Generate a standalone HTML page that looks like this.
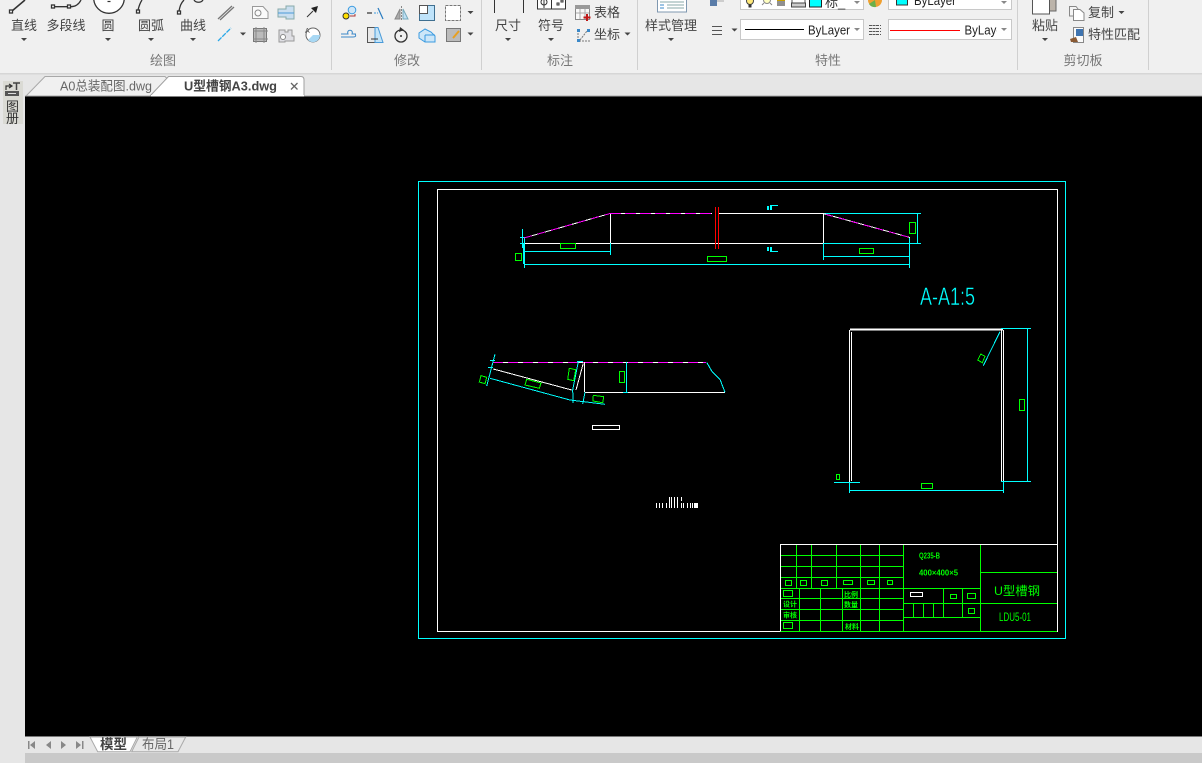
<!DOCTYPE html>
<html><head><meta charset="utf-8"><title>CAD</title>
<style>
html,body{margin:0;padding:0;background:#000;width:1202px;height:763px;overflow:hidden}
svg{display:block}
text{font-family:"Liberation Sans","Noto Sans CJK SC",sans-serif}
.t{font-size:13px;fill:#444;text-anchor:middle}
.l{font-size:13px;fill:#777;text-anchor:middle}
.s{fill:none;shape-rendering:crispEdges}
.g{fill:none;stroke:#0f0;stroke-width:1;shape-rendering:crispEdges}
.c{fill:none;stroke:#0ff;stroke-width:1;shape-rendering:crispEdges}
.w{fill:none;stroke:#fff;stroke-width:1;shape-rendering:crispEdges}
.gt{fill:#0f0}
</style></head><body>
<svg width="1202" height="763" viewBox="0 0 1202 763" xmlns="http://www.w3.org/2000/svg">
<!-- backgrounds -->
<rect width="1202" height="763" fill="#e6e6e6"/>
<rect width="1202" height="73" fill="#f0f0f0"/>
<rect y="73" width="1202" height="1.5" fill="#d6d6d6"/>
<rect x="25" y="96" width="1177" height="640" fill="#000"/>
<rect x="25" y="736" width="1177" height="1" fill="#777"/>
<rect x="25" y="753" width="1177" height="10" fill="#c9c9c9"/>
<!-- ribbon separators -->
<g stroke="#d0d0d0" class="s"><path d="M331.500 0V70M481.500 0V70M637.500 0V70M1017.500 0V70M1148.500 0V70"/></g>
<!-- draw group icons -->
<g fill="none" stroke="#333" stroke-width="1.300">
<path d="M12 11L25 0" stroke-width="1.600"/><rect x="9.500" y="10" width="3" height="3" fill="#fff"/>
<path d="M54 6.700H68M71 6.700C76 6.700 79 4 81 0"/><rect x="51.500" y="5" width="3" height="3" fill="#fff"/><rect x="67.500" y="5" width="3" height="3" fill="#fff"/>
<circle cx="109" cy="-2" r="15.300" fill="#fff"/><path d="M107.500 1.500H110.500" stroke-width="1.200"/>
<path d="M138 10C139 6 140 3 142 0"/><rect x="136.500" y="10" width="3" height="3" fill="#fff"/>
<path d="M179 11C180 6 181 3 184 0M194 0C196 3 201 3 203 0"/><rect x="177.500" y="11" width="3" height="3" fill="#fff"/>
</g>
<g class="t">
<text x="24" y="30" class="t">直线</text><text x="66" y="30" class="t">多段线</text><text x="108" y="30" class="t">圆</text><text x="151" y="30" class="t">圆弧</text><text x="193" y="30" class="t">曲线</text>
<text x="508" y="30" class="t">尺寸</text><text x="551" y="30" class="t">符号</text><text x="607" y="17" class="t">表格</text><text x="607" y="39" class="t">坐标</text><text x="671" y="30" class="t">样式管理</text>
<text x="1045" y="30" class="t">粘贴</text><text x="1101" y="17" class="t">复制</text><text x="1114" y="39" class="t">特性匹配</text>
</g>
<text x="163" y="65" class="l">绘图</text><text x="407" y="65" class="l">修改</text><text x="560" y="65" class="l">标注</text><text x="828" y="65" class="l">特性</text><text x="1083" y="65" class="l">剪切板</text>
<!-- dropdown arrows -->
<g fill="#444">
<path d="M21 38h6l-3 3zM105 38h6l-3 3zM148 38h6l-3 3zM190 38h6l-3 3zM240 32.500h6l-3 3zM467.500 11h6l-3 3zM467.500 32.500h6l-3 3zM505 38h6l-3 3zM548 38h6l-3 3zM624.500 32.500h6l-3 3zM668 38h6l-3 3zM731.500 28.500h6l-3 3zM1042 38h6l-3 3zM1118.500 11h6l-3 3z"/>
</g>
<!-- small draw icons -->
<path d="M218 19L232 6M220 20L234 7" stroke="#777" stroke-width="1.300" fill="none"/>
<path d="M218 41L231 28" stroke="#2aa8e8" stroke-width="1.300" stroke-dasharray="5 1" fill="none"/>
<path d="M252.500 6.500H263L268 12V18.500H252.500Z" fill="#fafafa" stroke="#999"/><circle cx="258" cy="13" r="3" fill="none" stroke="#888"/>
<path d="M278 9H286V6H294V19H286V17H278Z" fill="#c9def0" stroke="#8aa"/><path d="M278 13H294" stroke="#4a9ad8"/>
<path d="M307 17L313 11" stroke="#333"/><path d="M311 8L318 6L316 13Z" fill="#222"/>
<rect x="253.500" y="28.500" width="13" height="13" fill="#bbb" stroke="#777"/><path d="M253 31H268M253 39H268M256 27V43M264 27V43" stroke="#888" fill="none"/>
<path d="M279 30H285V32H288V30H292V36H294V41H285V42H279Z" fill="#dfdfe4" stroke="#999"/><circle cx="283" cy="37" r="2.500" fill="#fff" stroke="#888"/>
<circle cx="313" cy="35" r="7" fill="#fff" stroke="#666"/><path d="M313 35H320A7 7 0 0 1 308 40Z" fill="#a8d8f4"/><text x="305" y="33" font-size="7" fill="#555">A</text>
<!-- modify icons -->
<circle cx="352" cy="10" r="3.800" fill="#cfe6f7" stroke="#3b9be0"/><circle cx="346" cy="16" r="3" fill="#ffe000" stroke="#333"/><path d="M350 16H355V14" stroke="#a33" fill="none"/>
<path d="M367 13H372" stroke="#555" stroke-width="1.500"/><path d="M374 13H378" stroke="#3b9be0" stroke-dasharray="2 1"/><path d="M378 8L383 19" stroke="#2a7cc0" stroke-width="1.200"/>
<path d="M395 19L400 9V19Z" fill="#aaa" stroke="#888"/><path d="M403 9L408 19H403Z" fill="#bfe0f5" stroke="#7ab"/><path d="M401.500 6V20" stroke="#888" stroke-dasharray="2 1"/>
<rect x="419.500" y="5.500" width="15" height="15" fill="#bfe3fa" stroke="#3f6f90"/><rect x="419.500" y="5.500" width="8" height="8" fill="#fff" stroke="#555"/>
<rect x="445.500" y="5.500" width="15" height="15" fill="#fff" stroke="#777" stroke-dasharray="3 1"/>
<path d="M341 34H348C346 29 354 29 352 34H356M341 37H353Q357 37 355 34" fill="none" stroke="#3b88c8"/>
<path d="M367.500 27.500H375V42.500H367.500Z" fill="#e8e8e8" stroke="#555"/><path d="M375 27.500H378L383 42.500H375Z" fill="#c3e4f8" stroke="#4a9ad8"/><path d="M371 39H378" stroke="#333"/>
<circle cx="401" cy="36" r="6" fill="none" stroke="#333" stroke-width="1.300"/><circle cx="401" cy="36" r="1" fill="#333"/><path d="M400 27L404 30L399 32Z" fill="#333"/>
<path d="M419 33L425 29L431 32L435 36V42H425L419 38Z" fill="#cce6f8" stroke="#3b9be0"/><path d="M425 35H435M425 35V42" stroke="#3b9be0" fill="none"/>
<rect x="446.500" y="28.500" width="14" height="13" fill="#bbb" stroke="#777"/><path d="M453 38L459 31" stroke="#e8a020" stroke-width="2"/>
<!-- annotation icons -->
<path d="M494.500 0V13M523.500 0V13" stroke="#333"/>
<rect x="537.500" y="-2" width="28" height="11" fill="#fff" stroke="#333"/><path d="M551.500 0V9" stroke="#333"/><circle cx="544" cy="2" r="3" fill="none" stroke="#333"/><path d="M544 -1V8M557 3h2v2h-2zM561 0h2v2h-2z" stroke="#333" fill="none"/>
<rect x="575.500" y="5.500" width="14" height="14" fill="#f8f8f8" stroke="#888"/><rect x="575" y="5" width="15" height="4" fill="#999"/><path d="M580 9V19M585 9V19M576 13H589" stroke="#aaa"/><path d="M587 14V21M583.500 17.500H590.500" stroke="#c01818" stroke-width="2"/>
<path d="M578 30V41H590M580 40L587 31" stroke="#777" fill="none" stroke-dasharray="2 1"/><path d="M577 29h3v3h-3zM587 29h3v3h-3zM577 39h3v3h-3z" fill="#3b88c8"/>
<!-- style manager -->
<rect x="657.500" y="-3" width="29" height="15" fill="#fff" stroke="#7f98b0"/><path d="M660 2H684M667 5H684M667 8H684" stroke="#8aa" fill="none"/><path d="M660 5H664M660 8H664" stroke="#3b88c8"/>
<!-- properties row -->
<rect x="710" y="0" width="7" height="6" fill="#5a7ca8"/><path d="M717 1H724" stroke="#aaa"/>
<rect x="740.500" y="-3" width="123" height="12.500" fill="#fff" stroke="#c8c8c8"/>
<circle cx="750" cy="1" r="3.500" fill="#ffe97a" stroke="#444"/><rect x="748.500" y="4.500" width="3" height="3" fill="#333"/>
<circle cx="767" cy="0" r="3.500" fill="#ffffc0" stroke="#888"/><path d="M762 5L764 3M772 5L770 3" stroke="#888"/>
<path d="M777 1H785M777 3H785M777 5H785" stroke="#222"/><rect x="777" y="0" width="8" height="1" fill="#c8a000"/>
<rect x="792" y="-2" width="13" height="7" fill="#fff" stroke="#555"/><rect x="791.500" y="3" width="14" height="4" fill="#ccc" stroke="#444"/>
<rect x="809.500" y="-3" width="12" height="10" fill="#0ff" stroke="#222"/>
<text x="825" y="7" font-size="13" fill="#333">标_</text><path d="M854 1h6l-3 3z" fill="#888"/>
<circle cx="875" cy="0" r="7" fill="#f0a030"/><path d="M875 0L869 4A7 7 0 0 0 876 7Z" fill="#6ab04a"/><path d="M875 0V-7A7 7 0 0 1 882 0Z" fill="#e85040"/>
<rect x="888.500" y="-3" width="123" height="12.500" fill="#fff" stroke="#c8c8c8"/>
<rect x="896.500" y="-3" width="11" height="8" fill="#0ff" stroke="#333"/>
<text x="914" y="5" font-size="13" fill="#222" textLength="42" lengthAdjust="spacingAndGlyphs">ByLayer</text><path d="M1001 1h6l-3 3z" fill="#888"/>
<path d="M712 26.500H722M712 30.500H722M712 34.500H722" stroke="#555" fill="none" shape-rendering="crispEdges"/>
<rect x="740.500" y="19.500" width="123" height="20" fill="#fff" stroke="#c8c8c8"/>
<path d="M745 29.500H804" stroke="#000" class="s"/>
<text x="808" y="34.500" font-size="12.500" fill="#222" textLength="42" lengthAdjust="spacingAndGlyphs">ByLayer</text><path d="M854 28h6l-3 3z" fill="#888"/>
<path d="M869 25.500H881M869 28.500H881M869 31.500H881M869 34.500H881" stroke="#555" stroke-dasharray="3 .6" fill="none" shape-rendering="crispEdges"/>
<rect x="888.500" y="19.500" width="123" height="20" fill="#fff" stroke="#c8c8c8"/>
<path d="M890 30.500H960" stroke="#f00" class="s"/>
<svg x="960" y="20" width="37" height="19"><text x="4.500" y="14.500" font-size="12.500" fill="#222" textLength="42" lengthAdjust="spacingAndGlyphs">ByLayer</text></svg>
<path d="M1001 28h6l-3 3z" fill="#888"/>
<!-- clipboard -->
<rect x="1040" y="-3" width="16" height="14" fill="#bcb4aa" stroke="#666"/><rect x="1032.500" y="-3" width="17" height="17" fill="#fff" stroke="#555"/>
<path d="M1069.500 6.500H1076L1078 9V16H1069.500Z" fill="#f4f4f4" stroke="#888"/><path d="M1073.500 9.500H1080L1084 13V20.500H1073.500Z" fill="#fff" stroke="#888"/>
<rect x="1073.500" y="27.500" width="10" height="15" fill="#fafafa" stroke="#888"/><rect x="1076" y="29" width="7" height="7" fill="#3f74b0"/><path d="M1070 39L1076 37L1078 42H1071Z" fill="#8a5a34"/>
<!-- tabs -->
<path d="M26 96L45 76.500H165L168.500 80L150 96Z" fill="#f0f0f0" stroke="#a8a8a8"/>
<path d="M150 96L168.500 76.500H301Q304 76.500 304 80V96Z" fill="#fff" stroke="#a0a0a0"/>
<rect x="25" y="95.500" width="1177" height="1" fill="#a8a8a8"/><rect x="151" y="95" width="153" height="1.500" fill="#fff"/>
<text x="60" y="90.500" font-size="13" fill="#666" textLength="92" lengthAdjust="spacingAndGlyphs">A0总装配图.dwg</text>
<text x="184" y="90.500" font-size="13" font-weight="bold" fill="#444" textLength="93" lengthAdjust="spacingAndGlyphs">U型槽钢A3.dwg</text>
<path d="M291 83L297.500 89.500M297.500 83L291 89.500" stroke="#666" stroke-width="1.300" fill="none"/>
<!-- sidebar -->
<rect x="3" y="81" width="20" height="43" fill="#dadad4"/>
<path d="M6 90V86H11M9 84L12 86L9 88" fill="none" stroke="#333" stroke-width="1.200"/><path d="M13 83H20M16.500 83V90" stroke="#444" stroke-width="1.500" fill="none"/><rect x="5" y="91" width="14" height="5" fill="#555"/><path d="M8 93.500H16" stroke="#ddd"/>
<text x="12.500" y="111" font-size="13" fill="#333" text-anchor="middle">图</text><text x="12.500" y="123" font-size="13" fill="#333" text-anchor="middle">册</text>
<!-- bottom tabs -->
<path d="M90 737L97.700 751.700H130L137.300 737Z" fill="#fff" stroke="#aaa"/>
<path d="M131.700 751.700H178L185.700 737H139Z" fill="#e8e8e8" stroke="#aaa"/>
<text x="100" y="749" font-size="13.500" font-weight="bold" fill="#444">模型</text>
<text x="142" y="749" font-size="13.500" fill="#666" textLength="32" lengthAdjust="spacingAndGlyphs">布局1</text>
<g fill="#888"><path d="M28 741h1.500v8H28zM35 741v8l-5-4zM51 741v8l-5-4zM61 741v8l5-4zM76 741v8l5-4zM82 741h1.500v8H82z"/></g>
<!-- frames -->
<rect x="418.500" y="181.500" width="647" height="457" class="c"/>
<rect x="437.500" y="189.500" width="620" height="442" class="w"/>
<!-- top view -->
<g shape-rendering="crispEdges">
<path d="M524 243.500H823M610.500 213V243M823.500 213V243M718 213.500H823" class="w"/>
<path d="M823 243.500H921M823 213.500H921M917.500 213V243M610.500 243V255M823.500 243V260M524 251.500H610M823 256.500H909M524 264.500H909M524.500 237V268M523.500 243V264M909.500 237V268M522.500 229V248M520 237.500H526M520 243.500H524M767.500 206V210M768.500 206V210M770.500 210V205.500H778M767.500 247V251M768.500 247V251M770.500 247V251.500H778M771.500 205.500V210M771.500 247V251" class="c"/>
<path d="M715.500 207V249M718.500 207V249" stroke="#f00" fill="none"/>
<path d="M524 238L610 213.500" fill="none" stroke="#fff"/>
<path d="M524 238L610 213.500" fill="none" stroke="#f0f" stroke-dasharray="8 6"/>
<path d="M610 213.500H712" fill="none" stroke="#fff"/>
<path d="M610 213.500H712" fill="none" stroke="#f0f" stroke-dasharray="11 4"/>
<path d="M823 213.500L910 237.500" fill="none" stroke="#fff"/>
<path d="M826 214.500L910 237.500" fill="none" stroke="#f0f" stroke-dasharray="7 6"/>
</g>
<g class="g"><rect x="560.500" y="243.500" width="15" height="5"/><rect x="515.500" y="253.500" width="6" height="7"/><rect x="707.500" y="256.500" width="19" height="5"/><rect x="859.500" y="248.500" width="14" height="5"/><rect x="909.500" y="222.500" width="6" height="11"/></g>
<!-- side view -->
<g shape-rendering="crispEdges">
<path d="M493 362.500H706" fill="none" stroke="#fff"/>
<path d="M493 362.500H706" fill="none" stroke="#f0f" stroke-dasharray="10 5"/>
<path d="M585 392.500H725M584.500 362V392" class="w"/>
<path d="M626.500 362V392M623 392.500H628" class="c"/>
<path d="M706.700 362.300L711.700 371L720 379.300L725 392.300M490 378.300L570 400L605 404.300M495 354.300L486.700 386M578.300 361.700L572.700 390L573 403M582.700 404L585 392.300M490 360.500H495M488 367.500H493M577 361.500H583" fill="none" stroke="#0ff" stroke-width="1"/>
<path d="M493.300 369L571.700 390" fill="none" stroke="#fff"/>
<path d="M583.300 363.300L576 390" fill="none" stroke="#fff"/>
<path d="M481 375.700L486.700 377.300L485 383.700L479.300 382ZM526.700 379.300L541 383L539.300 388.300L525 385ZM569.300 368.300L575.700 369.700L573.700 380.700L567.700 379.300ZM593.300 395.300L603.700 396.700L602.700 402.700L593 401Z" fill="none" stroke="#0f0"/>
</g>
<rect x="619.500" y="371.500" width="5" height="11" class="g"/>
<rect x="592.500" y="425.500" width="27" height="4" class="w"/>
<path d="M656.500 503V508M659.500 503V508M662.500 503V508M666.500 503V508M669.500 497V508M671.500 497V508M674.500 497V508M677.500 497V508M681.500 497V501M681.500 503V508M683.500 503V508M687.500 503V508M690.500 503V508M692.500 503V508M694.500 503V508M695.500 503V508M696.500 503V508M697.500 503V508" class="w"/>
<!-- section view -->
<path d="M849.500 330V482M851.500 332V481M1001.500 330V481M1003.500 330V482" class="w"/>
<path d="M850 329.500H1003" stroke="#fff" stroke-width="2" fill="none" shape-rendering="crispEdges"/>
<path d="M1001 328.500H1031M1001 481.500H1031M1027.500 329V481M850 490.500H1003M849.500 482V493M1003.500 482V493M834 482.500H860" class="c"/>
<path d="M1000 331.700L983.300 365.700" fill="none" stroke="#0ff" shape-rendering="crispEdges"/>
<path d="M980.700 354L985 356.300L982.300 362.700L977.700 360Z" fill="none" stroke="#0f0" shape-rendering="crispEdges"/>
<g class="g"><rect x="836.500" y="474.500" width="3" height="5"/><rect x="921.500" y="483.500" width="11" height="5"/><rect x="1019.500" y="399.500" width="5" height="11"/></g>
<text x="920" y="305" font-size="25" fill="#0ff" stroke="#000" stroke-width=".4" textLength="55" lengthAdjust="spacingAndGlyphs">A-A1:5</text>
<!-- title block -->
<path d="M780.500 555.500H903M780.500 566.500H903M780.500 577.500H903M780.500 588.500H980M780.500 598.500H903M780.500 609.500H903M780.500 620.500H903M780.500 631.500H1057M903 603.500H1057M980 572.500H1057M903 617.500H980M796.500 545V588M811.500 545V588M836.500 545V588M860.500 545V631M879.500 545V631M799.500 588V631M820.500 588V631M842.500 588V631M903.500 545V631M980.500 545V631M943.500 588V617M962.500 588V617M913.500 603V617M923.500 603V617M933.500 603V617" class="g"/>
<path d="M780 544.500H1057M780.500 545V631" class="w"/>
<g class="g"><rect x="785.500" y="580.500" width="6" height="5"/><rect x="800.500" y="580.500" width="6" height="5"/><rect x="821.500" y="580.500" width="6" height="5"/><rect x="843.500" y="580.500" width="9" height="4"/><rect x="867.500" y="580.500" width="7" height="4"/><rect x="887.500" y="580.500" width="5" height="4"/><rect x="783.500" y="590.500" width="9" height="6"/><rect x="783.500" y="622.500" width="9" height="6"/><rect x="950.500" y="594.500" width="6" height="4"/><rect x="967.500" y="593.500" width="8" height="5"/><rect x="968.500" y="608.500" width="6" height="5"/></g>
<rect x="910.500" y="592.500" width="12" height="4" class="w"/>
<g class="gt">
<text x="919" y="558.500" font-size="8" font-weight="bold" textLength="21" lengthAdjust="spacingAndGlyphs">Q235-B</text>
<text x="919" y="575.500" font-size="8" font-weight="bold" textLength="39" lengthAdjust="spacingAndGlyphs">400×400×5</text>
<text x="994" y="595" font-size="12" textLength="46" lengthAdjust="spacingAndGlyphs">U型槽钢</text>
<text x="999" y="621" font-size="12" textLength="32" lengthAdjust="spacingAndGlyphs">LDU5-01</text>
<text x="844" y="597" font-size="7" font-weight="bold">比例</text>
<text x="783" y="606.500" font-size="7" font-weight="bold">设计</text>
<text x="844" y="607" font-size="7" font-weight="bold">数量</text>
<text x="783" y="617.500" font-size="7" font-weight="bold">审核</text>
<text x="845" y="629" font-size="7" font-weight="bold">材料</text>
</g>
</svg>
</body></html>
